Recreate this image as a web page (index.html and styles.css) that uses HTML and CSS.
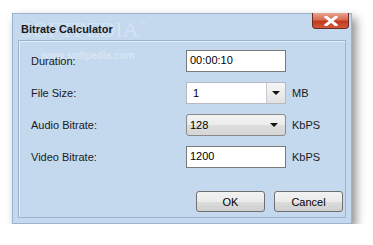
FILE: index.html
```html
<!DOCTYPE html>
<html lang="en">

<head>
    <meta charset="UTF-8">
    <title>Bitrate Calculator</title>
    <link rel="stylesheet" href="styles.css">
</head>

<body>
    <div class="window">
        <div class="titlebar">
            <span class="title">Bitrate Calculator</span>
            <div class="close">
                <svg width="14" height="10" viewBox="0 0 14 10">
                    <path d="M2 1 L12 9 M12 1 L2 9" stroke="#fff" stroke-width="3" stroke-linecap="square" />
                </svg>
            </div>
        </div>
        <div class="client">
            <div class="form">
                <label>Duration:</label>
                <div class="textbox">00:00:10</div>
                <span></span>

                <label>File Size:</label>
                <div class="editcombo">
                    <span class="value">1</span>
                    <span class="dropbtn"><i class="arrow"></i></span>
                </div>
                <span class="unit">MB</span>

                <label>Audio Bitrate:</label>
                <div class="listcombo">
                    <span>128</span>
                    <i class="arrow"></i>
                </div>
                <span class="unit">KbPS</span>

                <label>Video Bitrate:</label>
                <div class="textbox">1200</div>
                <span class="unit">KbPS</span>
            </div>
            <div class="buttons">
                <button class="btn">OK</button>
                <button class="btn">Cancel</button>
            </div>
        </div>
        <div class="wm-big">SOFTPEDIA<sup>™</sup></div>
        <div class="wm-url">www.softpedia.com</div>
    </div>
</body>

</html>
```

FILE: styles.css
```css
body {
    margin: 0;
    padding: 13px 0 0 12px;
    background: #fff;
    font-family: "Liberation Sans", Arial, sans-serif;
    font-size: 11px;
    color: #000;
}

.window {
    position: relative;
    width: 338px;
    height: 209px;
    background: #c4d9ee;
    border: 1px solid #9cb3cd;
    box-shadow: 4px 5px 9px rgba(0, 0, 0, 0.45);
    display: flex;
    flex-direction: column;
}

.titlebar {
    height: 26px;
    display: flex;
    justify-content: space-between;
    align-items: flex-start;
    padding-left: 8px;
}

.title {
    position: relative;
    z-index: 1;
    font-weight: bold;
    font-size: 11px;
    margin-top: 9px;
    color: #1a1a1a;
}

.close {
    width: 35px;
    height: 15px;
    margin-right: 2px;
    margin-top: -1px;
    border: 1px solid #6b2a20;
    border-top: none;
    border-radius: 0 0 4px 4px;
    background: linear-gradient(#e9a390 0%, #d86b52 45%, #c2391c 55%, #d05a3c 100%);
    display: flex;
    justify-content: center;
    align-items: center;
}

.client {
    flex: 1;
    margin: 0 5px 5px 5px;
    border: 1px solid #9db4cf;
    box-shadow: inset 1px 1px 0 #e4eef8;
    display: flex;
    flex-direction: column;
    justify-content: space-between;
    padding: 9px 2px 5px 12px;
}

.form {
    display: grid;
    grid-template-columns: 149px 100px auto;
    grid-auto-rows: 22px;
    row-gap: 10px;
    column-gap: 6px;
    align-items: center;
}

.form label {
    color: #1a1a1a;
}

.textbox {
    border: 1px solid #7a7a7a;
    background: #fff;
    padding: 3px 3px 0;
    box-sizing: border-box;
    height: 22px;
    font-size: 11px;
}

.editcombo {
    height: 22px;
    box-sizing: border-box;
    border: 1px solid #b5b9c0;
    background: #fff;
    display: flex;
    align-items: stretch;
}

.editcombo .value {
    flex: 1;
    padding-left: 6px;
    font-size: 11px;
    line-height: 20px;
}

.dropbtn {
    width: 18px;
    border-left: 1px solid #c7cad0;
    background: linear-gradient(#f7f7f7, #e2e2e2);
    display: flex;
    justify-content: center;
    align-items: center;
}

.arrow {
    width: 0;
    height: 0;
    border-left: 4px solid transparent;
    border-right: 4px solid transparent;
    border-top: 4px solid #111;
}

.listcombo {
    height: 22px;
    box-sizing: border-box;
    border: 1px solid #8a8a8a;
    border-radius: 3px;
    background: linear-gradient(#f4f4f4 0%, #ebebeb 50%, #dddddd 51%, #d6d6d6 100%);
    display: flex;
    justify-content: space-between;
    align-items: center;
    padding: 0 7px 0 3px;
    font-size: 11px;
}

.unit {
    color: #1a1a1a;
}

.buttons {
    display: flex;
    justify-content: flex-end;
    gap: 9px;
}

.btn {
    width: 69px;
    height: 21px;
    border: 1px solid #707070;
    border-radius: 3px;
    background: linear-gradient(#f2f2f2 0%, #ebebeb 50%, #dddddd 51%, #cfcfcf 100%);
    font-family: "Liberation Sans", Arial, sans-serif;
    font-size: 11px;
    color: #000;
    padding: 0;
}

.wm-big {
    position: absolute;
    left: 7px;
    top: 3px;
    font-family: "Liberation Serif", serif;
    font-size: 22px;
    color: rgba(255, 255, 255, 0.3);
    pointer-events: none;
}

.wm-big sup {
    font-size: 8px;
    vertical-align: 10px;
}

.wm-url {
    position: absolute;
    left: 28px;
    top: 36px;
    font-size: 10px;
    font-weight: bold;
    color: rgba(255, 255, 255, 0.35);
    pointer-events: none;
}
```
